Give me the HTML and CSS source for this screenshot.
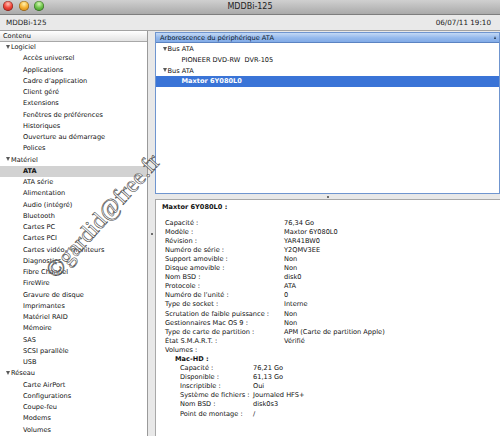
FILE: index.html
```html
<!DOCTYPE html>
<html lang="fr">
<head>
<meta charset="utf-8">
<title>MDDBi-125</title>
<link rel="stylesheet" href="styles.css">
</head>
<body>
<div class="window">
  <div class="titlebar">
    <div class="lights">
      <span class="light red"></span>
      <span class="light yellow"></span>
      <span class="light green"></span>
    </div>
    <div class="title">MDDBi-125</div>
    <div class="spacer"></div>
  </div>
  <div class="toolbar">
    <span>MDDBi-125</span>
    <span>06/07/11 19:10</span>
  </div>
  <div class="main">
    <aside class="sidebar">
      <div class="col-header">Contenu</div>
      <ul class="outline">
        <li class="group"><span class="disclosure"></span>Logiciel</li>
        <li class="item">Accès universel</li>
        <li class="item">Applications</li>
        <li class="item">Cadre d’application</li>
        <li class="item">Client géré</li>
        <li class="item">Extensions</li>
        <li class="item">Fenêtres de préférences</li>
        <li class="item">Historiques</li>
        <li class="item">Ouverture au démarrage</li>
        <li class="item">Polices</li>
        <li class="group"><span class="disclosure"></span>Matériel</li>
        <li class="item selected">ATA</li>
        <li class="item">ATA série</li>
        <li class="item">Alimentation</li>
        <li class="item">Audio (intégré)</li>
        <li class="item">Bluetooth</li>
        <li class="item">Cartes PC</li>
        <li class="item">Cartes PCI</li>
        <li class="item">Cartes vidéo / moniteurs</li>
        <li class="item">Diagnostics</li>
        <li class="item">Fibre Channel</li>
        <li class="item">FireWire</li>
        <li class="item">Gravure de disque</li>
        <li class="item">Imprimantes</li>
        <li class="item">Matériel RAID</li>
        <li class="item">Mémoire</li>
        <li class="item">SAS</li>
        <li class="item">SCSI parallèle</li>
        <li class="item">USB</li>
        <li class="group"><span class="disclosure"></span>Réseau</li>
        <li class="item">Carte AirPort</li>
        <li class="item">Configurations</li>
        <li class="item">Coupe-feu</li>
        <li class="item">Modems</li>
        <li class="item">Volumes</li>
      </ul>
    </aside>
    <div class="vsplit"><span class="grip"></span></div>
    <section class="content">
      <div class="tree">
        <div class="tree-header">
          <span>Arborescence du périphérique ATA</span>
          <span class="sort"></span>
        </div>
        <ul class="tree-list">
          <li class="group"><span class="disclosure"></span>Bus ATA</li>
          <li class="item">PIONEER DVD-RW&nbsp;&nbsp;DVR-105</li>
          <li class="group"><span class="disclosure"></span>Bus ATA</li>
          <li class="item selected">Maxtor 6Y080L0</li>
        </ul>
      </div>
      <div class="hsplit"><span class="grip"></span></div>
      <div class="detail">
        <div class="d-title">Maxtor 6Y080L0 :</div>
        <div class="props">
          <span>Capacité :</span><span>76,34 Go</span>
          <span>Modèle :</span><span>Maxtor 6Y080L0</span>
          <span>Révision :</span><span>YAR41BW0</span>
          <span>Numéro de série :</span><span>Y2QMV3EE</span>
          <span>Support amovible :</span><span>Non</span>
          <span>Disque amovible :</span><span>Non</span>
          <span>Nom BSD :</span><span>disk0</span>
          <span>Protocole :</span><span>ATA</span>
          <span>Numéro de l’unité :</span><span>0</span>
          <span>Type de socket :</span><span>Interne</span>
          <span>Scrutation de faible puissance :</span><span>Non</span>
          <span>Gestionnaires Mac OS 9 :</span><span>Non</span>
          <span>Type de carte de partition :</span><span>APM (Carte de partition Apple)</span>
          <span>État S.M.A.R.T. :</span><span>Vérifié</span>
          <span class="full">Volumes :</span>
        </div>
        <div class="vol-name">Mac-HD :</div>
        <div class="props sub">
          <span>Capacité :</span><span>76,21 Go</span>
          <span>Disponible :</span><span>61,13 Go</span>
          <span>Inscriptible :</span><span>Oui</span>
          <span>Système de fichiers :</span><span>Journaled HFS+</span>
          <span>Nom BSD :</span><span>disk0s3</span>
          <span>Point de montage :</span><span>/</span>
        </div>
      </div>
    </section>
  </div>
  <div class="watermark">©gardid@free.fr</div>
</div>
</body>
</html>
```

FILE: styles.css
```css
* { box-sizing: border-box; }

html, body {
  margin: 0;
  padding: 0;
}

body {
  width: 500px;
  height: 436px;
  overflow: hidden;
  font-family: "DejaVu Sans", "Noto Sans", sans-serif;
  color: #111;
  background: #e8e8e8;
}

.window {
  position: relative;
  width: 500px;
  height: 436px;
  overflow: hidden;
  display: flex;
  flex-direction: column;
}

/* title bar */
.titlebar {
  height: 15px;
  flex: none;
  display: grid;
  grid-template-columns: 1fr auto 1fr;
  align-items: center;
  background: linear-gradient(#d0d0d0, #aaaaaa);
  border-bottom: 1px solid #7e7e7e;
}

.lights {
  display: flex;
  gap: 5.5px;
  padding-left: 3px;
  margin-top: -2px;
}

.light {
  width: 10px;
  height: 10px;
  border-radius: 50%;
  box-shadow: inset 0 0 0 0.5px rgba(0,0,0,0.45);
}

.light.red { background: radial-gradient(circle at 50% 30%, #ffc4b8 0, #f0463a 45%, #a5150c 100%); }
.light.yellow { background: radial-gradient(circle at 50% 30%, #fff2b0 0, #f6b232 45%, #b86b06 100%); }
.light.green { background: radial-gradient(circle at 50% 30%, #d6f7b6 0, #6ec44a 45%, #2b7c18 100%); }

.title {
  font-size: 8px;
  color: #222;
  margin-top: -2px;
}

/* toolbar */
.toolbar {
  height: 16px;
  flex: none;
  display: flex;
  justify-content: space-between;
  align-items: center;
  padding: 0 9px 0 6px;
  font-size: 7.2px;
  color: #222;
  background: #e9e9e9;
  border-bottom: 1px solid #a3a3a3;
}

/* main area */
.main {
  flex: 1;
  display: flex;
  min-height: 0;
}

.sidebar {
  width: 148px;
  flex: none;
  background: #fff;
  border-right: 1px solid #9a9a9a;
}

.col-header {
  height: 11px;
  line-height: 10px;
  padding-left: 3px;
  font-size: 6.6px;
  color: #111;
  background: linear-gradient(#ffffff, #e3e3e3);
  border-bottom: 1px solid #a8a8a8;
}

.outline, .tree-list {
  list-style: none;
  margin: 0;
  padding: 0;
  font-size: 6.6px;
}

.outline li {
  height: 11.25px;
  line-height: 11.25px;
  white-space: nowrap;
}

.outline .group { padding-left: 6px; }
.outline .item { padding-left: 23px; }

.outline .selected {
  background: #d2d2d2;
  font-weight: bold;
}

.disclosure {
  display: inline-block;
  width: 0;
  height: 0;
  border-left: 2.3px solid transparent;
  border-right: 2.3px solid transparent;
  border-top: 4px solid #5a5a5a;
  margin-right: 1px;
  vertical-align: 0.5px;
}

.vsplit {
  width: 7px;
  flex: none;
  display: flex;
  align-items: center;
  justify-content: center;
}

.grip {
  width: 2px;
  height: 2px;
  background: #444;
  border-radius: 1px;
}

.content {
  flex: 1;
  display: flex;
  flex-direction: column;
  padding-top: 1px;
  min-width: 0;
}

.tree {
  height: 162px;
  flex: none;
  background: #fff;
  border: 1px solid #6f95cf;
}

.tree-header {
  height: 10px;
  display: flex;
  justify-content: space-between;
  align-items: center;
  padding: 0 3px 0 4px;
  font-size: 6.6px;
  color: #0d1a2c;
  background: linear-gradient(#c3d9f5, #93b8ec 55%, #82abe7);
  border-bottom: 1px solid #5b83c2;
}

.sort {
  width: 0;
  height: 0;
  border-left: 1.6px solid transparent;
  border-right: 1.6px solid transparent;
  border-bottom: 3px solid #2a3a52;
}

.tree-list { padding-top: 1px; }

.tree-list li {
  height: 10.75px;
  line-height: 10.75px;
  white-space: nowrap;
}

.tree-list .group { padding-left: 6.5px; }
.tree-list .item { padding-left: 25.5px; }

.tree-list .selected {
  background: #3a74d7;
  color: #fff;
  font-weight: bold;
}

.hsplit {
  height: 5px;
  flex: none;
  display: flex;
  align-items: center;
  justify-content: center;
}

.detail {
  flex: 1;
  background: #fff;
  border-left: 1px solid #a8a8a8;
  border-top: 1px solid #a8a8a8;
  padding: 3px 0 0 6px;
  font-size: 6.6px;
  line-height: 9.05px;
  color: #111;
  white-space: nowrap;
}

.d-title {
  font-weight: bold;
  margin-bottom: 7px;
}

.props {
  display: grid;
  grid-template-columns: 119px auto;
  margin-left: 3px;
}

.props .full { grid-column: 1 / -1; }

.vol-name {
  font-weight: bold;
  margin-left: 13px;
}

.props.sub {
  margin-left: 18px;
  grid-template-columns: 73px auto;
  margin-top: 0.5px;
}

/* watermark overlay */
.watermark {
  position: absolute;
  left: 103px;
  top: 216px;
  transform: translate(-50%, -50%) rotate(-48deg);
  font-family: "Liberation Serif", "DejaVu Serif", serif;
  font-size: 23.5px;
  color: rgba(255, 255, 255, 0.6);
  -webkit-text-stroke: 0.6px #4a4a4a;
  white-space: nowrap;
  pointer-events: none;
}
```
